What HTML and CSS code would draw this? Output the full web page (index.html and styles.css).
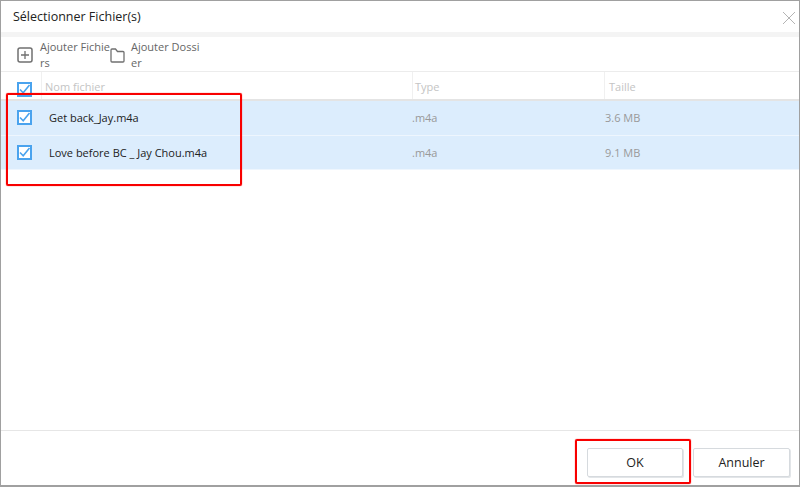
FILE: index.html
```html
<!DOCTYPE html>
<html>
<head>
  <meta charset="utf-8">
  <title>Sélectionner Fichier(s)</title>
  <link rel="stylesheet" href="styles.css">
</head>
<body>
  <div class="dialog">
    <div class="title-bar">
      <span class="title">Sélectionner Fichier(s)</span>
      <svg class="close-icon" width="14" height="14" viewBox="0 0 14 14"><path d="M1 1L13 13M13 1L1 13" stroke="#b4b4b4" fill="none"/></svg>
    </div>
    <div class="strip"></div>

    <div class="toolbar">
      <div class="tool tool-file">
        <svg width="16" height="16" viewBox="0 0 16 16"><rect x="1" y="1" width="14" height="14" rx="2" stroke="#707070" stroke-width="1.500" fill="none"/><path d="M8 4V12M4 8H12" stroke="#707070" stroke-width="1.300" fill="none"/></svg>
        <span class="tool-label">Ajouter Fichiers</span>
      </div>
      <div class="tool tool-folder">
        <svg width="15" height="15" viewBox="0 0 15 15"><path d="M1 13V2a1 1 0 0 1 1-1h3.500l2 2.500H13a1 1 0 0 1 1 1V13a1 1 0 0 1-1 1H2a1 1 0 0 1-1-1z" stroke="#707070" stroke-width="1.300" fill="none"/></svg>
        <span class="tool-label">Ajouter Dossier</span>
      </div>
    </div>

    <div class="file-table">
      <div class="row head">
        <div class="cell-check">
          <svg class="check" width="15" height="15" viewBox="0 0 15 15"><rect x="1" y="1" width="13" height="13" fill="#fff" stroke="#4aa3ee" stroke-width="2"/><path d="M3 7.500L6.200 10.800L12.500 3" stroke="#4aa3ee" stroke-width="1.600" fill="none"/></svg>
        </div>
        <div class="col-name head-cell">Nom fichier</div>
        <div class="col-type head-cell">Type</div>
        <div class="col-size head-cell">Taille</div>
      </div>
      <div class="row item">
        <div class="cell-check">
          <svg class="check" width="15" height="15" viewBox="0 0 15 15"><rect x="1" y="1" width="13" height="13" fill="#fff" stroke="#4aa3ee" stroke-width="2"/><path d="M3 7.500L6.200 10.800L12.500 3" stroke="#4aa3ee" stroke-width="1.600" fill="none"/></svg>
        </div>
        <div class="col-name">Get back_Jay.m4a</div>
        <div class="col-type">.m4a</div>
        <div class="col-size">3.6 MB</div>
      </div>
      <div class="row item">
        <div class="cell-check">
          <svg class="check" width="15" height="15" viewBox="0 0 15 15"><rect x="1" y="1" width="13" height="13" fill="#fff" stroke="#4aa3ee" stroke-width="2"/><path d="M3 7.500L6.200 10.800L12.500 3" stroke="#4aa3ee" stroke-width="1.600" fill="none"/></svg>
        </div>
        <div class="col-name">Love before BC _ Jay Chou.m4a</div>
        <div class="col-type">.m4a</div>
        <div class="col-size">9.1 MB</div>
      </div>
    </div>

    <div class="footer">
      <button class="btn">OK</button>
      <button class="btn btn-cancel">Annuler</button>
    </div>

    <div class="mark mark-rows"></div>
    <div class="mark mark-ok"></div>
  </div>
</body>
</html>
```

FILE: styles.css
```css
* {
  box-sizing: border-box;
  margin: 0;
  padding: 0;
}
html, body {
  height: 100%;
}
body {
  font-family: "Open Sans", "Noto Sans", Arial, sans-serif;
  background-color: #fff;
  overflow: hidden;
}
.dialog {
  position: relative;
  height: 487px;
  display: flex;
  flex-direction: column;
  border: 1px solid #a0a0a0;
  border-bottom-width: 2px;
  background-color: #fff;
}
.title-bar {
  height: 31px;
  display: flex;
  align-items: center;
  justify-content: space-between;
  padding: 0 3px 0 12px;
}
.title {
  font-size: 12.500px;
  color: #222;
}
.close-icon {
  margin-top: 3px;
}
.strip {
  height: 5px;
  background-color: #f4f4f4;
}
.toolbar {
  height: 35px;
  display: flex;
  border-bottom: 1px solid #ececec;
  padding-left: 16px;
}
.tool {
  display: flex;
  align-items: center;
}
.tool-file {
  width: 93px;
}
.tool-file svg {
  margin-right: 7px;
  margin-top: 2px;
}
.tool-folder svg {
  margin-right: 6px;
  margin-top: 2px;
}
.tool-label {
  width: 70px;
  padding-top: 2px;
  font-size: 11px;
  line-height: 16px;
  color: #666;
  word-break: break-all;
}
.row {
  display: flex;
  align-items: center;
}
.head {
  height: 29px;
  border-bottom: 2px solid #e4e4e4;
}
.item {
  height: 34.500px;
  background-color: #dcedfd;
  border-bottom: 1px solid #eef6fe;
  font-size: 11px;
  color: #222;
}
.cell-check {
  width: 40px;
  padding-left: 16px;
  display: flex;
  align-items: center;
}
.head .check {
  margin-top: 8px;
}
.col-name {
  width: 371px;
  padding-left: 8px;
}
.col-type {
  width: 192px;
  color: #999;
}
.col-size {
  flex: 1;
  padding-left: 1px;
  color: #999;
}
.head-cell {
  height: 27px;
  line-height: 29px;
  font-size: 11px;
  color: #c4c4c4;
  border-left: 1px solid #f0f0f0;
}
.head .col-name {
  padding-left: 3px;
}
.head .col-type {
  padding-left: 2px;
}
.head .col-size {
  padding-left: 4px;
}
.footer {
  margin-top: auto;
  height: 55px;
  border-top: 1px solid #e6e6e6;
  display: flex;
  justify-content: flex-end;
  gap: 10px;
  padding: 17px 9px 0 0;
}
.btn {
  width: 96px;
  height: 29px;
  font-family: inherit;
  font-size: 12.500px;
  color: #222;
  background-color: #fff;
  border: 1px solid #d6dade;
  border-radius: 2px;
  box-shadow: 1px 1px 0 #e2e5e8;
}
.btn-cancel {
  width: 97px;
}
.mark {
  position: absolute;
  border: 2px solid #f80000;
  border-radius: 2px;
  box-shadow: 0 0 1px #f80000;
}
.mark-rows {
  left: 5px;
  top: 92px;
  width: 236px;
  height: 93px;
}
.mark-ok {
  left: 574px;
  top: 438px;
  width: 116px;
  height: 45px;
}
```
